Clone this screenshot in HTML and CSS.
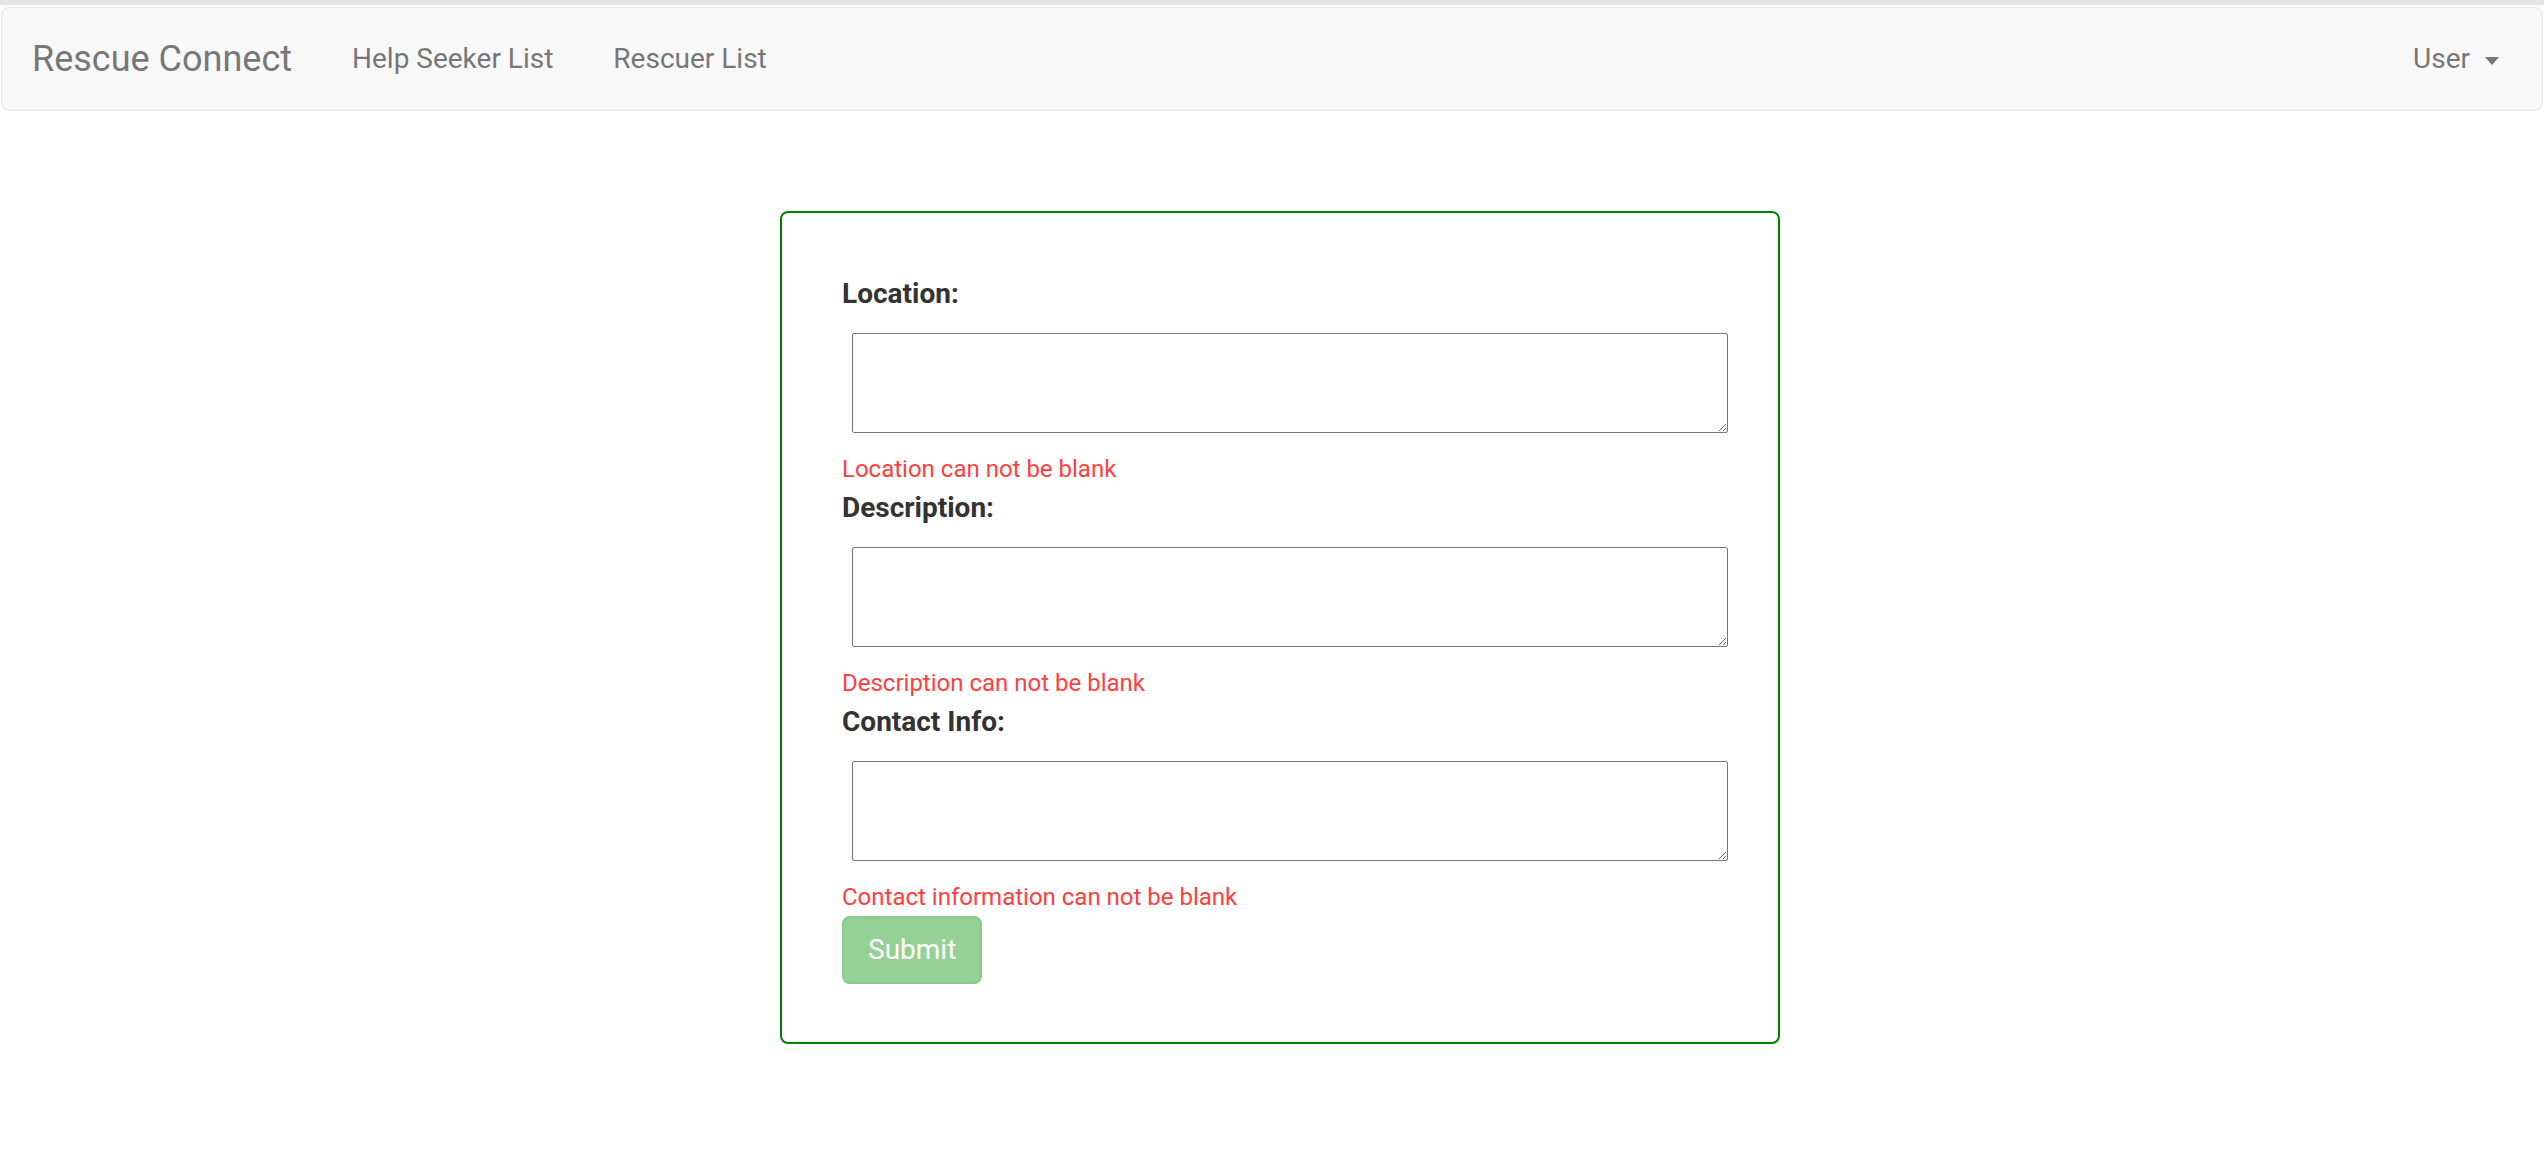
FILE: index.html
```
<!DOCTYPE html>
<html lang="en">

<head>
  <meta charset="UTF-8">
  <meta name="viewport" content="width=device-width, initial-scale=1.0">
  <title>Rescue Connect</title>

  <link rel="stylesheet" href="styles.css">

</head>

<body>

  <div class="top-strip"></div>

  <nav class="navbar">
    <a class="brand" href="#">Rescue Connect</a>
    <a class="nav-link" href="#">Help Seeker List</a>
    <a class="nav-link" href="#">Rescuer List</a>
    <a class="nav-link user" href="#">User <span class="caret"></span></a>
  </nav>

  <section class="wrap">
    <form class="card">
      <label for="location">Location:</label>
      <textarea id="location"></textarea>
      <p class="error">Location can not be blank</p>

      <label for="description">Description:</label>
      <textarea id="description"></textarea>
      <p class="error">Description can not be blank</p>

      <label for="contact">Contact Info:</label>
      <textarea id="contact"></textarea>
      <p class="error">Contact information can not be blank</p>

      <button type="button" class="btn-submit" disabled>Submit</button>
    </form>
  </section>

</body>

</html>
```

FILE: styles.css
```
body {
  margin: 0;
  font-family: Roboto, "Liberation Sans", sans-serif;
  color: #333;
  background: #fff;
}

.top-strip {
  height: 5px;
  background: #e4e4e4;
}

.navbar {
  display: flex;
  align-items: center;
  min-height: 102px;
  margin: 2px 1px 0 1px;
  background: #f8f8f8;
  border: 1px solid #e7e7e7;
  border-radius: 8px;
}

.navbar a {
  color: #777;
  text-decoration: none;
}

.brand {
  padding: 0 30px;
  font-size: 36px;
  line-height: 40px;
}

.nav-link {
  padding: 0 30px;
  font-size: 28px;
  line-height: 40px;
}

.nav-link.user {
  margin-left: auto;
  padding-right: 43px;
}

.caret {
  display: inline-block;
  width: 0;
  height: 0;
  margin-left: 8px;
  vertical-align: middle;
  border-top: 8px solid #777;
  border-left: 7px solid transparent;
  border-right: 7px solid transparent;
}

.wrap {
  display: flex;
  justify-content: center;
  padding-left: 16px;
  margin-top: 100px;
}

.card {
  box-sizing: border-box;
  width: 1000px;
  padding: 61px 60px 58px;
  border: 2px solid #008000;
  border-radius: 8px;
}

.card label {
  display: block;
  font-size: 28px;
  font-weight: bold;
  line-height: 40px;
}

.card textarea {
  display: block;
  box-sizing: border-box;
  width: 876px;
  height: 100px;
  margin: 19px 0 19px 10px;
  border: 1px solid #767676;
  border-radius: 2px;
  font-family: inherit;
}

.error {
  margin: 0 0 2px;
  font-size: 24px;
  line-height: 34px;
  color: #ff4040;
}

.btn-submit {
  padding: 12px 24px;
  font-family: inherit;
  font-size: 28px;
  line-height: 40px;
  color: #fff;
  background: #95d195;
  border: 2px solid #88cb88;
  border-radius: 8px;
}
```
